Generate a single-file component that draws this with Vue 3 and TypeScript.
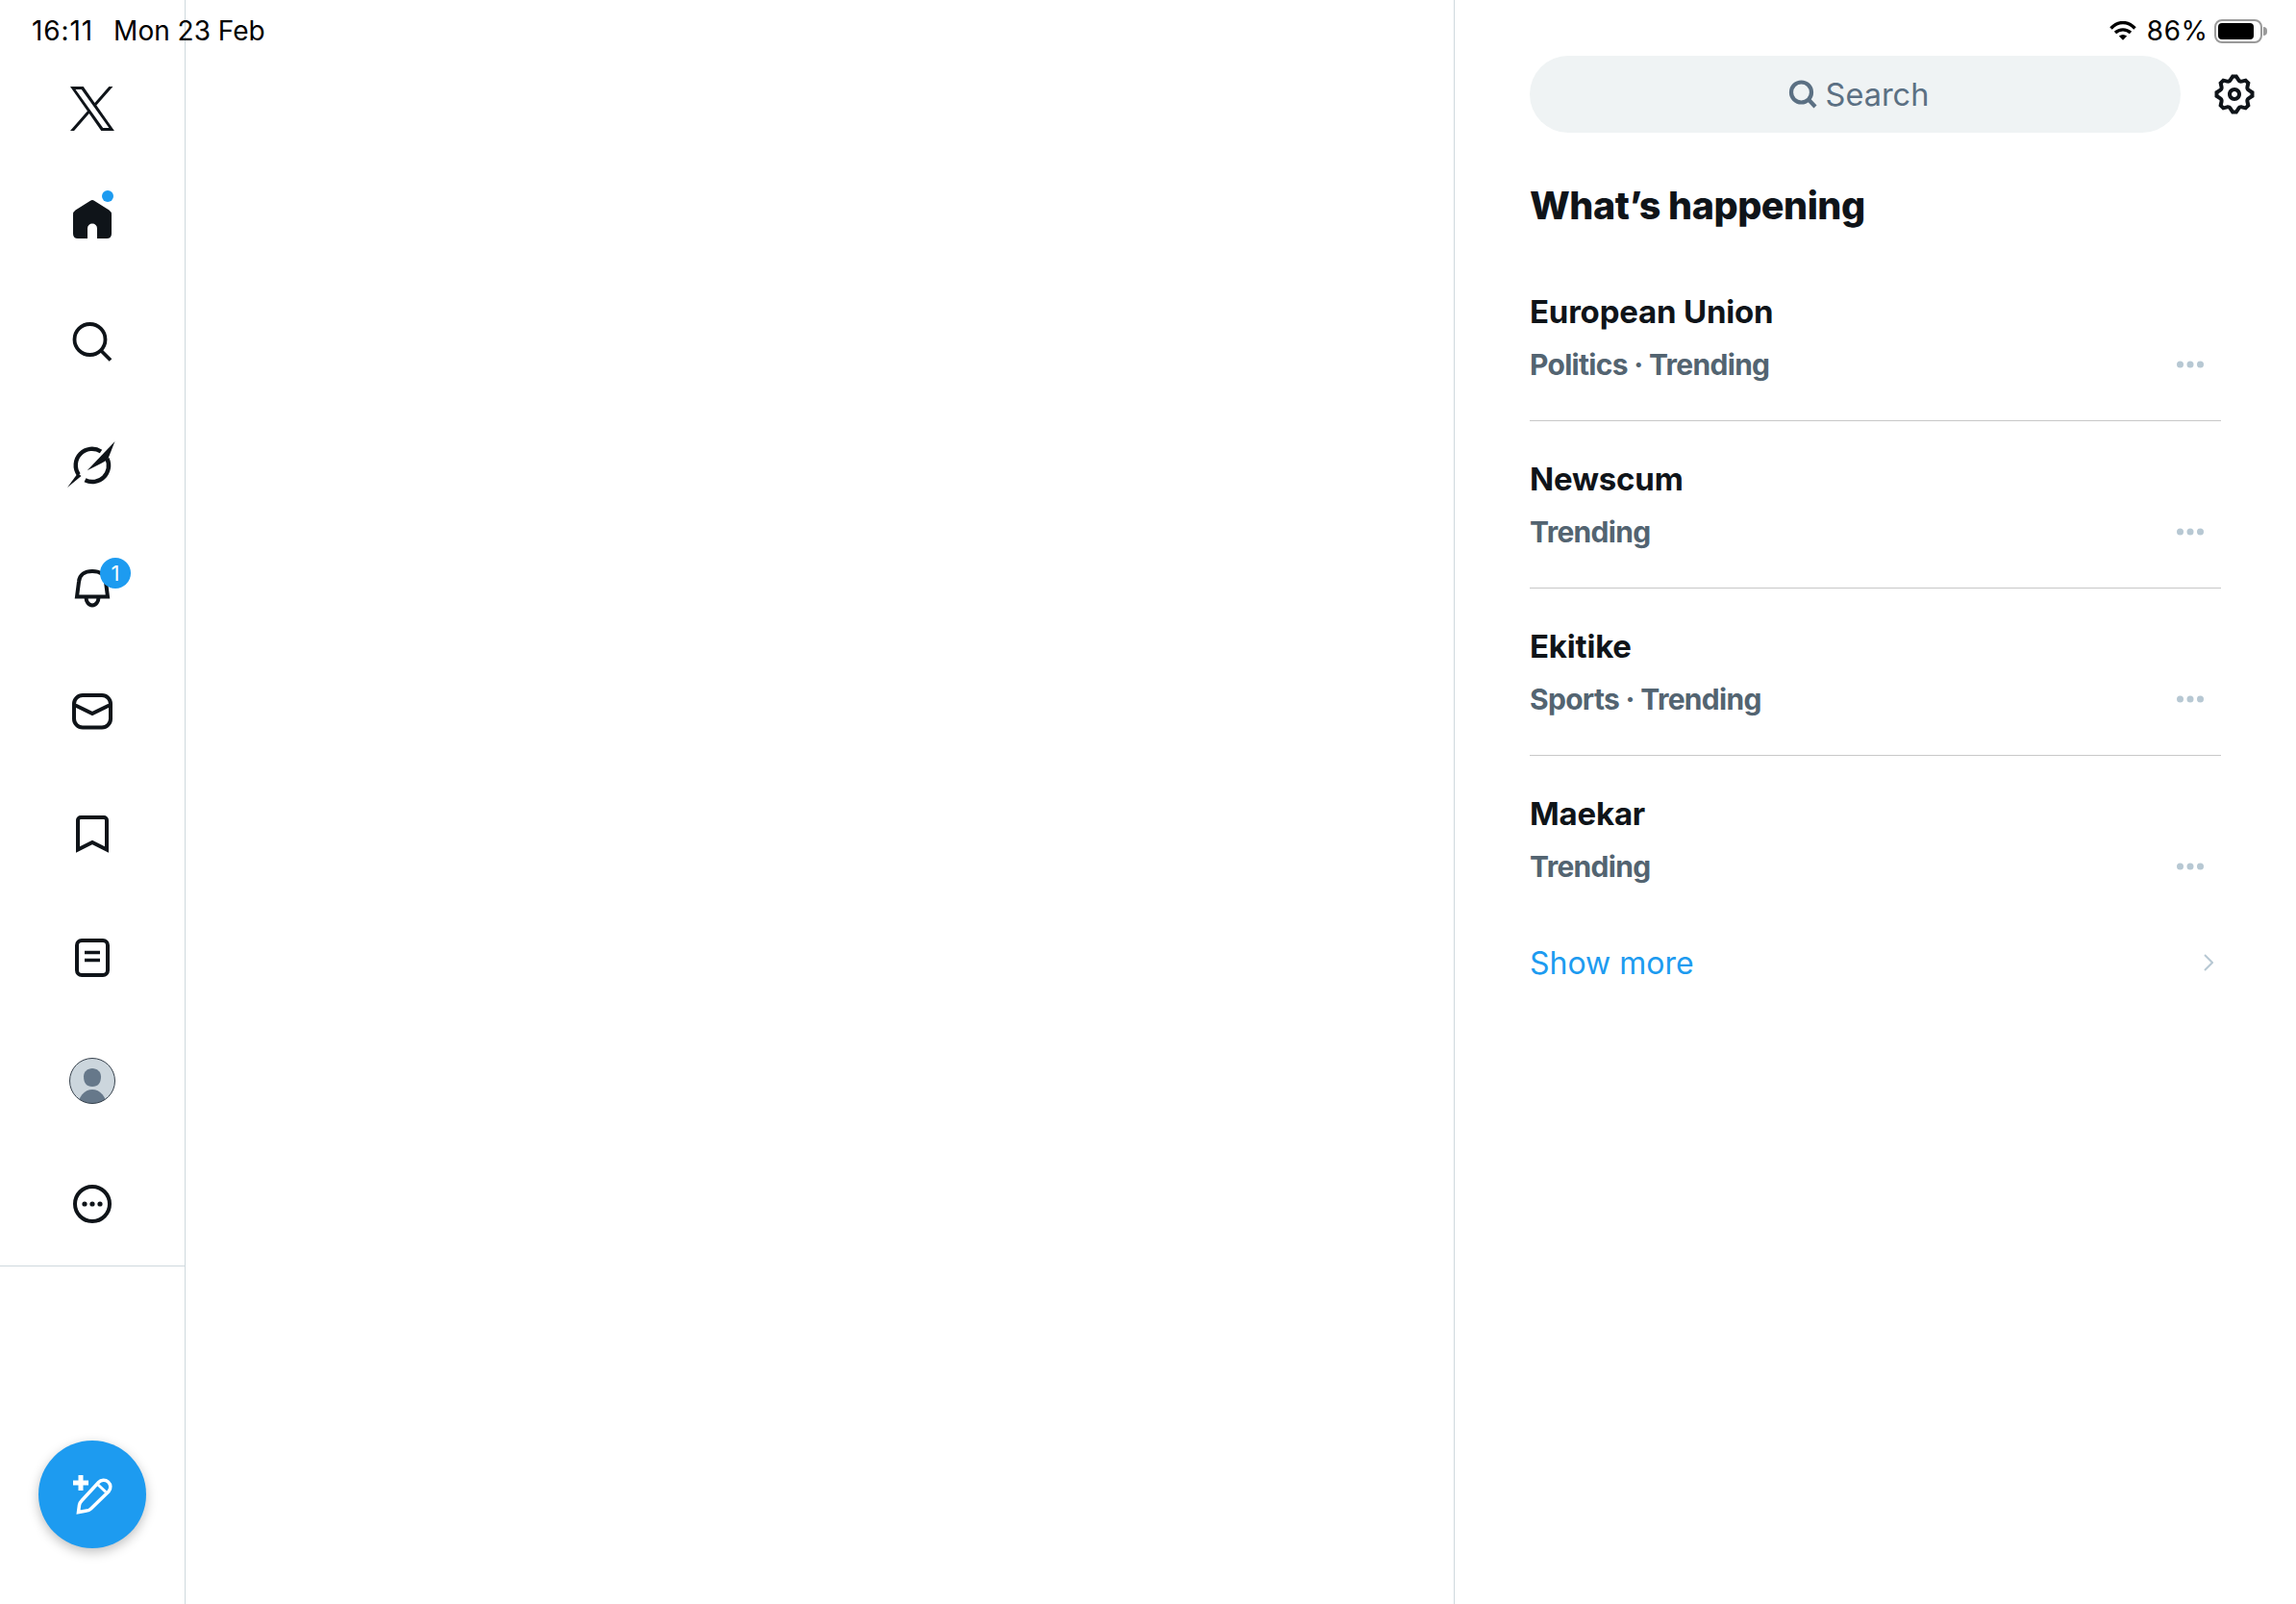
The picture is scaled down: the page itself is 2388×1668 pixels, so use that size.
<script setup lang="ts">
const gear = "M10.54 1.75h2.92l1.57 2.36c.11.17.32.25.53.21l2.53-.59 2.17 2.17-.58 2.54c-.05.2.04.41.21.53l2.36 1.57v2.92l-2.36 1.57c-.17.12-.26.33-.21.53l.58 2.54-2.17 2.17-2.53-.59c-.21-.04-.42.04-.53.21l-1.57 2.36h-2.92l-1.58-2.36c-.11-.17-.32-.25-.52-.21l-2.54.59-2.17-2.17.58-2.54c.05-.2-.03-.41-.21-.53l-2.35-1.57v-2.92L4.1 8.97c.18-.12.26-.33.21-.53L3.73 5.9 5.9 3.73l2.54.59c.2.04.41-.04.52-.21l1.58-2.36zm1.07 2l-.98 1.47C10.05 6.08 9 6.5 7.99 6.27l-1.46-.34-.6.6.33 1.46c.24 1.01-.18 2.07-1.05 2.64l-1.46.98v.78l1.46.98c.87.57 1.29 1.63 1.05 2.64l-.33 1.46.6.6 1.46-.34c1.01-.23 2.06.19 2.64 1.05l.98 1.47h.78l.97-1.47c.58-.86 1.63-1.28 2.65-1.05l1.45.34.61-.6-.34-1.46c-.23-1.01.18-2.07 1.05-2.64l1.47-.98v-.78l-1.47-.98c-.87-.57-1.28-1.63-1.05-2.64l.34-1.46-.61-.6-1.45.34c-1.02.23-2.07-.19-2.65-1.05l-.97-1.47h-.78zM12 10.5c-.83 0-1.5.67-1.5 1.5s.67 1.5 1.5 1.5c.82 0 1.5-.67 1.5-1.5s-.68-1.5-1.5-1.5zM8.5 12c0-1.93 1.56-3.5 3.5-3.5 1.93 0 3.5 1.57 3.5 3.5s-1.57 3.5-3.5 3.5c-1.94 0-3.5-1.57-3.5-3.5z";

const trends: { title: string; sub: string; last?: boolean }[] = [
  { title: "European Union", sub: "Politics · Trending" },
  { title: "Newscum", sub: "Trending" },
  { title: "Ekitike", sub: "Sports · Trending" },
  { title: "Maekar", sub: "Trending", last: true },
];
</script>

<template>
  <div class="page">
    <div class="status">
      <div class="status-left"><span class="time">16:11</span><span>Mon 23 Feb</span></div>
      <div class="status-right">
        <svg class="wifi" width="28" height="20" viewBox="0 0 28 20">
          <path d="M1.5 7.5C9-.5 19-.5 26.500 7.500" fill="none" stroke="#000" stroke-width="3.400" />
          <path d="M6 12C10.500 7.800 17.500 7.800 22 12" fill="none" stroke="#000" stroke-width="3.400" />
          <path d="M9.800 15.400Q14 12.400 18.200 15.400L14 19.700Z" fill="#000" />
        </svg>
        <span class="pct">86%</span>
        <div class="battery"><div class="battery-fill"></div></div>
        <div class="battery-nub"></div>
      </div>
    </div>

    <aside class="rail">
      <div class="logo-row">
        <svg width="46" height="46" viewBox="0 0 24 24">
          <path fill="#0f1419" d="M14.258 10.152L23.176 0h-2.113l-7.747 8.813L7.133 0H0l9.352 13.328L0 23.973h2.113l8.176-9.309 6.531 9.309h7.133zm-2.895 3.293l-.949-1.328L2.875 1.56h3.246l6.086 8.523.945 1.328 7.910 11.078h-3.246zm0 0" />
        </svg>
      </div>
      <nav class="nav">
        <a class="nav-item">
          <span class="icon">
            <svg width="48" height="48" viewBox="0 0 48 48">
              <path fill="#0f1419" d="M22 4.800Q24 3.400 26 4.800L41.500 14.500Q44 16 44 19.500V39Q44 44 39 44H29V33.500a5 5 0 0 0-10 0V44H9Q4 44 4 39V19.500Q4 16 6.500 14.500Z" />
            </svg>
            <span class="dot"></span>
          </span>
        </a>
        <a class="nav-item">
          <span class="icon">
            <svg width="48" height="48" viewBox="0 0 48 48" fill="none" stroke="#0f1419" stroke-width="3.800">
              <circle cx="21.500" cy="21" r="16" />
              <path d="M33 32.500L43 42.500" />
            </svg>
          </span>
        </a>
        <a class="nav-item">
          <span class="icon">
            <svg class="over" width="48" height="48" viewBox="0 0 48 48">
              <path d="M33 9.500A17 17 0 0 0 9.800 33.500" fill="none" stroke="#0f1419" stroke-width="4.400" />
              <path d="M39.500 17A17 17 0 0 1 16.500 39.300" fill="none" stroke="#0f1419" stroke-width="4.400" />
              <path fill="#0f1419" d="M47.500-1L40 18L33 22L18.700 29.300Z" />
              <path fill="#0f1419" d="M-2 47L9 32L12.500 35Z" />
            </svg>
          </span>
        </a>
        <a class="nav-item">
          <span class="icon">
            <svg width="48" height="48" viewBox="0 0 48 48" fill="none" stroke="#0f1419" stroke-width="4">
              <path d="M8 32.500L10 17C10.500 9.500 16.500 6 24 6C31.500 6 37.500 9.500 38 17L40 32.500Z" />
              <path d="M17.500 33C17.500 37.500 20 41.500 24 41.500C28 41.500 30.500 37.500 30.500 33" />
            </svg>
            <span class="badge">1</span>
          </span>
        </a>
        <a class="nav-item">
          <span class="icon">
            <svg width="48" height="48" viewBox="0 0 48 48" fill="none" stroke="#0f1419" stroke-width="4">
              <rect x="5" y="7" width="38" height="33.500" rx="9" />
              <path d="M6.500 17.500L24 26L41.500 17.500" />
            </svg>
          </span>
        </a>
        <a class="nav-item">
          <span class="icon">
            <svg width="48" height="48" viewBox="0 0 48 48" fill="none" stroke="#0f1419" stroke-width="4">
              <path d="M9 39.500V9a3 3 0 0 1 3-3H36a3 3 0 0 1 3 3V39.500L24 32Z" />
            </svg>
          </span>
        </a>
        <a class="nav-item">
          <span class="icon">
            <svg width="48" height="48" viewBox="0 0 48 48" fill="none" stroke="#0f1419" stroke-width="4">
              <rect x="8" y="6" width="32" height="36" rx="5" />
              <path d="M16 18.500H32M16 26.500H32" stroke-width="3.600" />
            </svg>
          </span>
        </a>
        <a class="nav-item">
          <span class="icon">
            <svg width="48" height="48" viewBox="0 0 48 48">
              <defs>
                <clipPath id="avatar-clip"><circle cx="24" cy="24" r="23.500" /></clipPath>
              </defs>
              <circle cx="24" cy="24" r="23.500" fill="#ccd6dd" />
              <g clip-path="url(#avatar-clip)" fill="#66788a">
                <path d="M15 19.500C15 14.500 19 11 24 11C29 11 33 14.500 33 19.500C33 26 30 30 24 30C18 30 15 26 15 19.500Z" />
                <ellipse cx="24" cy="51" rx="15" ry="18" />
              </g>
              <circle cx="24" cy="24" r="23.500" fill="none" stroke="#37424d" stroke-width="1" />
            </svg>
          </span>
        </a>
        <a class="nav-item">
          <span class="icon">
            <svg width="48" height="48" viewBox="0 0 48 48">
              <circle cx="24" cy="24" r="18" fill="none" stroke="#0f1419" stroke-width="4" />
              <circle cx="16" cy="24" r="2.600" fill="#0f1419" />
              <circle cx="24" cy="24" r="2.600" fill="#0f1419" />
              <circle cx="32" cy="24" r="2.600" fill="#0f1419" />
            </svg>
          </span>
        </a>
      </nav>
      <div class="compose-wrap">
        <button class="compose" type="button">
          <svg width="48" height="48" viewBox="0 0 48 48" fill="none" stroke="#fff">
            <path d="M12 4V20M4 12H20" stroke-width="5" />
            <path d="M9.500 42.500L10.500 35Q11 32.500 13 30.500L30.500 11.500A7 7 0 0 1 41 21L22.500 39Q20.500 41 18 41Z" stroke-width="3.500" />
            <path d="M30 14L38 21.500" stroke-width="3" />
          </svg>
        </button>
      </div>
    </aside>

    <main class="center"></main>

    <section class="side">
      <div class="search-row">
        <div class="search">
          <svg width="32" height="32" viewBox="0 0 32 32" fill="none" stroke="#5b7083" stroke-width="4.200">
            <circle cx="14.500" cy="14" r="10.500" />
            <path d="M22 21.500L29 29" />
          </svg>
          <span>Search</span>
        </div>
        <button class="gear" type="button">
          <svg width="48" height="48" viewBox="0 0 24 24"><path fill="#0f1419" :d="gear" /></svg>
        </button>
      </div>
      <h2 class="heading">What’s happening</h2>
      <div class="trends">
        <div v-for="t in trends" :key="t.title" class="trend" :class="{ last: t.last }">
          <div class="trend-title">{{ t.title }}</div>
          <div class="trend-sub">
            <span>{{ t.sub }}</span>
            <svg class="dots" width="28" height="8" viewBox="0 0 28 8" fill="#b7c8d3">
              <circle cx="3.500" cy="4" r="3.500" />
              <circle cx="14" cy="4" r="3.500" />
              <circle cx="24.500" cy="4" r="3.500" />
            </svg>
          </div>
        </div>
      </div>
      <div class="more">
        <span>Show more</span>
        <svg width="10" height="18" viewBox="0 0 10 18" fill="none" stroke="#b7c8d3" stroke-width="2">
          <path d="M1 1L9 9L1 17" />
        </svg>
      </div>
    </section>
  </div>
</template>

<style>
html,
body {
  margin: 0;
  background: #fff;
}
</style>

<style scoped>
.page {
  position: relative;
  display: flex;
  width: 2388px;
  height: 1668px;
  overflow: hidden;
  background: #fff;
  color: #0f1419;
  font-family: Inter, "Liberation Sans", sans-serif;
}
.status {
  position: absolute;
  top: 13px;
  left: 33px;
  right: 30px;
  height: 38px;
  display: flex;
  align-items: center;
  justify-content: space-between;
  font-size: 28px;
  color: #000;
  z-index: 2;
}
.status-left {
  display: flex;
  gap: 21px;
}
.time {
  letter-spacing: 0.9px;
}
.pct {
  font-feature-settings: "tnum";
}
.status-right {
  display: flex;
  align-items: center;
}
.wifi {
  margin-right: 10px;
}
.battery {
  margin-left: 7px;
  width: 50px;
  height: 25px;
  box-sizing: border-box;
  border: 2px solid #9a9a9a;
  border-radius: 8px;
  padding: 2px;
}
.battery-fill {
  width: 37px;
  height: 100%;
  background: #000;
  border-radius: 4px;
}
.battery-nub {
  width: 4px;
  height: 9px;
  margin-left: 1px;
  background: #9a9a9a;
  border-radius: 0 4px 4px 0;
}
.rail {
  flex: none;
  width: 192px;
  box-sizing: content-box;
  height: 100%;
  border-right: 1px solid #cfd9de;
  display: flex;
  flex-direction: column;
}
.logo-row {
  height: 164px;
  padding-top: 90px;
  box-sizing: border-box;
  display: flex;
  justify-content: center;
}
.nav {
  display: flex;
  flex-direction: column;
  border-bottom: 1px solid #cfd9de;
}
.nav-item {
  height: 128px;
  display: flex;
  align-items: center;
  justify-content: center;
}
.icon {
  position: relative;
  width: 48px;
  height: 48px;
  display: block;
}
.icon svg {
  display: block;
}
.over {
  overflow: visible;
}
.dot {
  position: absolute;
  top: -6px;
  left: 34px;
  width: 12px;
  height: 12px;
  border-radius: 50%;
  background: #1d9bf0;
}
.badge {
  position: absolute;
  top: -8px;
  left: 32px;
  width: 32px;
  height: 32px;
  border-radius: 50%;
  background: #1d9bf0;
  color: #fff;
  font-size: 22px;
  line-height: 32px;
  text-align: center;
}
.compose-wrap {
  flex: 1;
  display: flex;
  align-items: flex-end;
  justify-content: center;
  padding-bottom: 58px;
}
.compose {
  width: 112px;
  height: 112px;
  padding: 0;
  border: none;
  border-radius: 50%;
  background: #1d9bf0;
  box-shadow: 0 4px 12px rgba(0, 0, 0, 0.25);
  display: flex;
  align-items: center;
  justify-content: center;
}
.center {
  flex: none;
  width: 1319px;
  border-right: 1px solid #cfd9de;
}
.side {
  flex: 1;
  padding: 58px 78px 0;
  min-width: 0;
}
.search-row {
  display: flex;
  align-items: center;
  width: 780px;
}
.search {
  flex: none;
  width: 677px;
  height: 80px;
  box-sizing: border-box;
  padding-left: 6px;
  border-radius: 40px;
  background: #eff3f4;
  display: flex;
  align-items: center;
  justify-content: center;
  gap: 8px;
  color: #5b7083;
  font-size: 32.500px;
}
.gear {
  flex: none;
  margin-left: 32px;
  width: 48px;
  height: 48px;
  padding: 0;
  border: none;
  background: none;
}
.gear svg {
  display: block;
}
.heading {
  margin: 51px 0 0;
  height: 50px;
  font-size: 39.500px;
  line-height: 50px;
  font-weight: 800;
  letter-spacing: -0.5px;
}
.trends {
  width: 719px;
  margin-top: 25px;
}
.trend {
  padding: 38px 0 36px;
  border-bottom: 1px solid #c8c8c8;
}
.trend.last {
  border-bottom: none;
}
.trend-title {
  height: 44px;
  font-size: 33px;
  line-height: 44px;
  font-weight: 700;
  letter-spacing: -0.2px;
}
.trend-sub {
  margin-top: 11px;
  height: 44px;
  padding-right: 18px;
  display: flex;
  align-items: center;
  justify-content: space-between;
  color: #536471;
  font-size: 30px;
  line-height: 44px;
  font-weight: 700;
  letter-spacing: -0.7px;
}
.dots {
  flex: none;
}
.more {
  width: 711px;
  margin-top: 20px;
  height: 44px;
  display: flex;
  align-items: center;
  justify-content: space-between;
  color: #1d9bf0;
  font-size: 32px;
}
</style>
